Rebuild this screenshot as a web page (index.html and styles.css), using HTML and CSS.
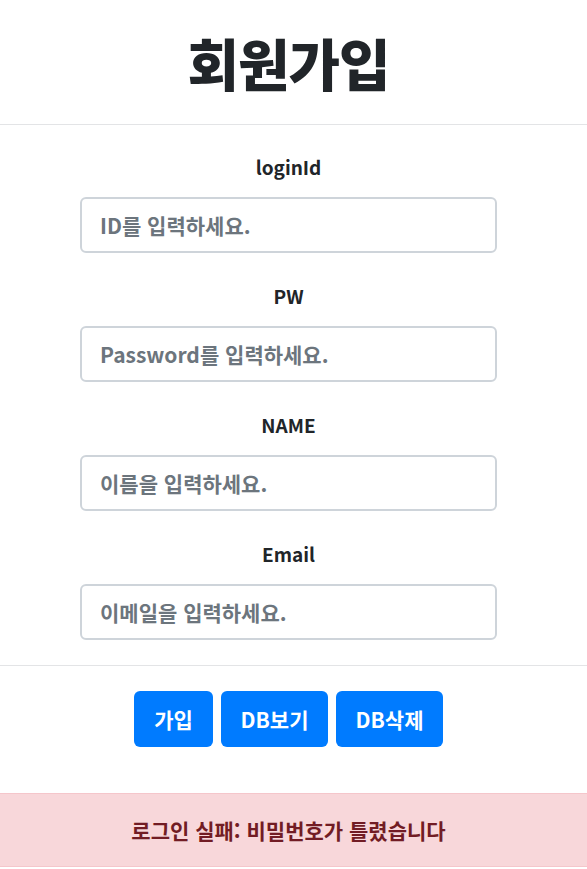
FILE: index.html
```html
<!DOCTYPE html>
<html lang="ko">
<head>
<meta charset="utf-8">
<title>회원가입</title>
<link rel="stylesheet" href="styles.css">
</head>
<body>
<header class="header">
  <h1 class="title">회원가입</h1>
</header>
<main class="form">
  <div class="group">
    <label class="label" for="loginId">loginId</label>
    <input class="input" id="loginId" type="text" placeholder="ID를 입력하세요.">
  </div>
  <div class="group">
    <label class="label" for="pw">PW</label>
    <input class="input" id="pw" type="password" placeholder="Password를 입력하세요.">
  </div>
  <div class="group">
    <label class="label" for="name">NAME</label>
    <input class="input" id="name" type="text" placeholder="이름을 입력하세요.">
  </div>
  <div class="group last">
    <label class="label" for="email">Email</label>
    <input class="input" id="email" type="text" placeholder="이메일을 입력하세요.">
  </div>
</main>
<div class="actions">
  <button class="btn btn-join">가입</button>
  <button class="btn btn-db">DB보기</button>
  <button class="btn btn-db">DB삭제</button>
</div>
<div class="alert">로그인 실패: 비밀번호가 틀렸습니다</div>
</body>
</html>
```
FILE: styles.css
```css
* { box-sizing: border-box; }
html, body { margin: 0; padding: 0; background: #fff; }
body {
  font-family: "Noto Sans CJK KR", "Noto Sans", sans-serif;
  color: #212529;
  width: 587px;
}
.header {
  height: 125px;
  border-bottom: 1px solid #e3e4e6;
  padding-right: 10px;
  display: flex;
  align-items: center;
  justify-content: center;
}
.title {
  margin: 0;
  font-size: 56px;
  font-weight: 900;
  line-height: 1;
  letter-spacing: -1px;
  color: #212529;
}
.form {
  padding: 27px 10px 0 0;
  display: flex;
  flex-direction: column;
  align-items: center;
}
.group {
  display: flex;
  flex-direction: column;
  align-items: center;
  margin-bottom: 28px;
}
.group.last { margin-bottom: 25px; }
.label {
  height: 30px;
  line-height: 29px;
  font-size: 19px;
  font-weight: 700;
  color: #212529;
  margin-bottom: 15px;
}
.input {
  width: 417px;
  height: 56px;
  border: 2px solid #ced4da;
  border-radius: 6px;
  padding: 0 18px;
  font-family: inherit;
  font-size: 21px;
  font-weight: 700;
  color: #495057;
  background: #fff;
  outline: none;
}
.input::placeholder { color: #6c757d; opacity: 1; }
.actions {
  border-top: 1px solid #e3e4e6;
  padding: 25px 10px 0 0;
  display: flex;
  justify-content: center;
  gap: 8px;
}
.btn {
  height: 56px;
  border: none;
  border-radius: 6px;
  background: #007bff;
  color: #fff;
  font-family: inherit;
  font-size: 21px;
  font-weight: 700;
  padding: 0;
  cursor: pointer;
}
.btn-join { width: 79px; }
.btn-db { width: 107px; }
.alert {
  margin-top: 46px;
  height: 74px;
  padding-right: 10px;
  background: #f8d7da;
  border-top: 1px solid #f5c6cb;
  border-bottom: 1px solid #f5c6cb;
  color: #721c24;
  font-size: 21px;
  font-weight: 700;
  display: flex;
  align-items: center;
  justify-content: center;
}
```
